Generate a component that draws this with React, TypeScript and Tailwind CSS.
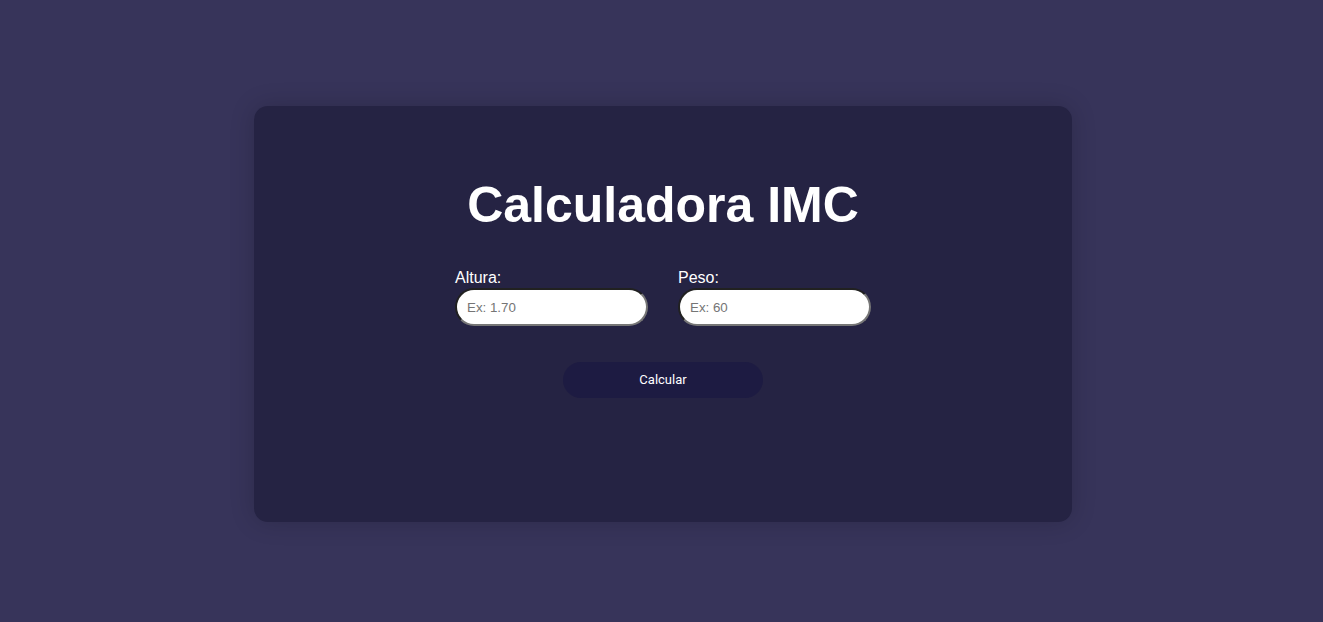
import React from 'react';

export default function App() {
  return (
    <div className="min-h-[622px] w-full bg-[#37345a] flex justify-center pl-[3px] pt-[106px] font-['Liberation_Sans',Arial,sans-serif]">
      <div className="w-[818px] h-[416px] bg-[#252343] rounded-[14px] shadow-[0_0_24px_rgba(0,0,0,0.18)] flex flex-col items-center pt-[71px]">
        <h1 className="text-white text-[50px] font-bold leading-[57px]">Calculadora IMC</h1>
        <div className="flex gap-[30px] mt-[34px]">
          <div className="flex flex-col">
            <label className="text-white text-[16px] leading-[19px] mb-[1px]">Altura:</label>
            <input
              type="text"
              placeholder="Ex: 1.70"
              className="w-[193px] h-[38px] rounded-full bg-white border-2 [border-style:inset] border-[#767676] px-[10px] text-[13.333px] text-black placeholder:text-[#757575] outline-none"
            />
          </div>
          <div className="flex flex-col">
            <label className="text-white text-[16px] leading-[19px] mb-[1px]">Peso:</label>
            <input
              type="text"
              placeholder="Ex: 60"
              className="w-[193px] h-[38px] rounded-full bg-white border-2 [border-style:inset] border-[#767676] px-[10px] text-[13.333px] text-black placeholder:text-[#757575] outline-none"
            />
          </div>
        </div>
        <button className="mt-[36px] w-[200px] h-[36px] rounded-full bg-[#1d1b42] text-white text-[13px] font-['Roboto',sans-serif]">
          Calcular
        </button>
      </div>
    </div>
  );
}
